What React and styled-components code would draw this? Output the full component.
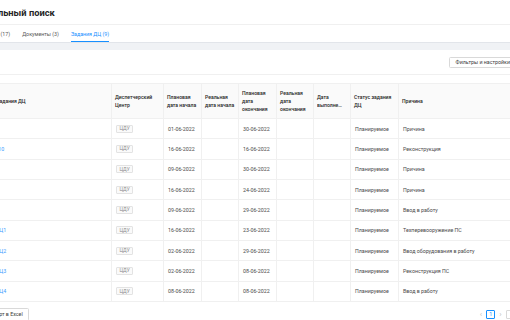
import React from 'react'
import styled, { createGlobalStyle } from 'styled-components'

const GlobalStyle = createGlobalStyle`
    html, body {
        margin: 0;
        padding: 0;
        background: #ffffff;
        overflow: hidden;
    }
    body {
        font-family: Roboto, "Noto Sans", sans-serif;
    }
`

const tabs = [
    { id: 1, title: 'Объекты (17)' },
    { id: 2, title: 'Документы (3)' },
    { id: 3, title: 'Задания ДЦ (9)', active: true },
]

const columns = [
    { title: 'Название Задания ДЦ', width: 143 },
    { title: 'Диспетчерский Центр', width: 52 },
    { title: 'Плановая дата начала', width: 38 },
    { title: 'Реальная дата начала', width: 37 },
    { title: 'Плановая дата окончания', width: 38 },
    { title: 'Реальная дата окончания', width: 37 },
    { title: 'Дата', clip: 'выполнения', width: 37 },
    { title: 'Статус задания ДЦ', width: 48 },
    { title: 'Причина' },
]

const rows = [
    { name: 'Задание 1', start: '01-06-2022', end: '30-06-2022', reason: 'Причина' },
    { name: 'Задание 110', start: '16-06-2022', end: '16-06-2022', reason: 'Реконструкция' },
    { name: 'Задание 3', start: '09-06-2022', end: '30-06-2022', reason: 'Причина' },
    { name: 'Задание 4', start: '16-06-2022', end: '24-06-2022', reason: 'Причина' },
    { name: 'Задание 5', start: '09-06-2022', end: '29-06-2022', reason: 'Ввод в работу' },
    { name: 'Задание ДЦ1', start: '16-06-2022', end: '23-06-2022', reason: 'Техперевооружение ПС' },
    { name: 'Задание ДЦ2', start: '02-06-2022', end: '29-06-2022', reason: 'Ввод оборудования в работу' },
    { name: 'Задание ДЦ3', start: '02-06-2022', end: '08-06-2022', reason: 'Реконструкция ПС' },
    { name: 'Задание ДЦ4', start: '08-06-2022', end: '08-06-2022', reason: 'Ввод в работу' },
]

export default function App() {
  return (
    <>
    <GlobalStyle />
    <Page>
        <TitleBar>
            <h1>Глобальный поиск</h1>
        </TitleBar>

        <TabBar>
            {tabs.map(item => <Tab key={item.id} active={item.active}>{item.title}</Tab>)}
        </TabBar>

        <Band />

        <Toolbar>
            <FilterButton>
                Фильтры и настройки
                <svg width="6" height="6" viewBox="0 0 12 12" fill="none" stroke="#595959" strokeWidth="1.2">
                    <path d="M1 3h10M1 9h10" />
                    <circle cx="4" cy="3" r="1.5" fill="#fff" />
                    <circle cx="8" cy="9" r="1.5" fill="#fff" />
                </svg>
            </FilterButton>
        </Toolbar>

        <Table>
            <colgroup>
                {columns.map((col, index) => <col key={index} style={col.width ? { width: col.width } : undefined} />)}
            </colgroup>
            <thead>
                <tr>
                    {columns.map((col, index) => <Th key={index}>
                        {col.title}
                        {col.clip && <Clip>{col.clip}</Clip>}
                    </Th>)}
                </tr>
            </thead>
            <tbody>
                {rows.map((row, index) => <tr key={index}>
                    <Td><Link>{row.name}</Link></Td>
                    <Td><Tag>ЦДУ</Tag></Td>
                    <Td>{row.start}</Td>
                    <Td></Td>
                    <Td>{row.end}</Td>
                    <Td></Td>
                    <Td></Td>
                    <Td>Планируемое</Td>
                    <Td>{row.reason}</Td>
                </tr>)}
            </tbody>
        </Table>

        <Footer>
            <ExportButton>Экспорт в Excel</ExportButton>
            <Pagination>
                <Arrow>‹</Arrow>
                <PageItem active>1</PageItem>
                <Arrow>›</Arrow>
                <SizeSelect>10 / стр.</SizeSelect>
            </Pagination>
        </Footer>
    </Page>
    </>
  )
}

const Page = styled.div`
    width: 580px;
    margin-left: -32px;
`

const TitleBar = styled.div`
    height: 24px;
    display: flex;
    align-items: center;
    padding-left: 5px;

    h1 {
        margin: 0;
        font-size: 9.3px;
        font-weight: 700;
        color: #262626;
    }
`

const TabBar = styled.div`
    height: 18px;
    box-sizing: border-box;
    border-top: 1px solid #f0f0f0;
    display: flex;
    align-items: stretch;
    gap: 12px;
    padding-left: 9px;
`

const Tab = styled.div`
    display: flex;
    align-items: center;
    font-size: 5.3px;
    padding-top: 1px;
    color: ${({ active }) => active ? '#1890ff' : '#595959'};
    border-bottom: 1.5px solid ${({ active }) => active ? '#1890ff' : 'transparent'};
`

const Band = styled.div`
    height: 8px;
    box-sizing: border-box;
    background: #f0f2f5;
    border-top: 1px solid #e2e5ea;
`

const Toolbar = styled.div`
    height: 25px;
    box-sizing: border-box;
    border-bottom: 1px solid #f0f0f0;
    display: flex;
    align-items: center;
    justify-content: flex-end;
    padding-right: 20px;
`

const FilterButton = styled.div`
    height: 11px;
    box-sizing: border-box;
    display: flex;
    align-items: center;
    gap: 5px;
    padding: 0 6px;
    border: 1px solid #d9d9d9;
    border-radius: 1.5px;
    font-size: 5.3px;
    color: #404040;
`

const Table = styled.table`
    margin-top: 8px;
    width: 100%;
    table-layout: fixed;
    border-collapse: collapse;
`

const Th = styled.th`
    height: 34px;
    padding: 0 3px;
    background: #fafafa;
    border: 1px solid #f0f0f0;
    text-align: left;
    vertical-align: middle;
    font-size: 5.1px;
    line-height: 8px;
    font-weight: 500;
    color: #262626;
`

const Clip = styled.div`
    max-width: 26px;
    white-space: nowrap;
    overflow: hidden;
    text-overflow: ellipsis;
`

const Td = styled.td`
    height: 20.33px;
    box-sizing: border-box;
    padding: 0 4px;
    border: 1px solid #f0f0f0;
    vertical-align: middle;
    font-size: 5.3px;
    color: #4a4a4a;
    white-space: nowrap;
    overflow: hidden;
`

const Link = styled.span`
    color: #3d9bff;
`

const Tag = styled.span`
    display: inline-flex;
    align-items: center;
    height: 8px;
    box-sizing: border-box;
    padding: 0 2.5px;
    border: 1px solid #e3e3e3;
    border-radius: 1px;
    background: #fafafa;
    font-size: 4.8px;
    color: #8c8c8c;
`

const Footer = styled.div`
    display: flex;
    align-items: center;
    justify-content: space-between;
    padding: 6px 12px 0 10px;
`

const ExportButton = styled.div`
    height: 13px;
    box-sizing: border-box;
    display: flex;
    align-items: center;
    padding: 0 5px;
    border: 1px solid #d9d9d9;
    border-radius: 1.5px;
    font-size: 5.3px;
    color: #404040;
`

const Pagination = styled.div`
    display: flex;
    align-items: center;
    gap: 4px;
`

const Arrow = styled.span`
    font-size: 8px;
    color: #bfbfbf;
`

const PageItem = styled.span`
    width: 9px;
    height: 9px;
    box-sizing: border-box;
    display: flex;
    align-items: center;
    justify-content: center;
    border: 1px solid ${({ active }) => active ? '#1890ff' : '#d9d9d9'};
    border-radius: 1px;
    font-size: 5.3px;
    color: ${({ active }) => active ? '#1890ff' : '#404040'};
`

const SizeSelect = styled.span`
    height: 9px;
    box-sizing: border-box;
    display: flex;
    align-items: center;
    padding: 0 4px;
    border: 1px solid #d9d9d9;
    border-radius: 1px;
    font-size: 5.3px;
    color: #404040;
`
